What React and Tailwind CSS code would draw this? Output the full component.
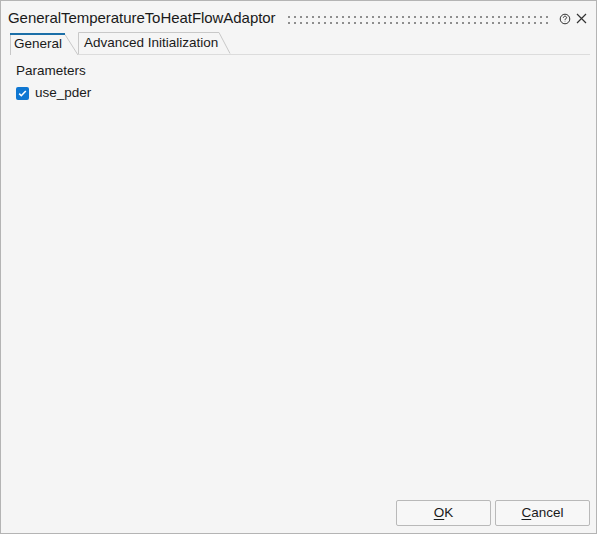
import React from 'react';

const FONT = { fontFamily: '"Liberation Sans", Arial, sans-serif' };

// Grip pattern between the title and the window buttons
function Grip() {
  return (
    <svg className="h-[8px] w-[262px]" viewBox="0 0 262 8">
      <defs>
        <pattern id="grip" width="6" height="6" patternUnits="userSpaceOnUse">
          <rect x="0" y="0" width="2" height="2" fill="#8e8e8e" />
        </pattern>
      </defs>
      <rect x="0" y="0" width="262" height="8" fill="url(#grip)" />
    </svg>
  );
}

function HelpIcon() {
  return (
    <svg width="12" height="12" viewBox="0 0 12 12" fill="none" stroke="#333" strokeWidth="1">
      <circle cx="6" cy="6" r="4.8" />
      <path d="M4.4 4.8c0-1 .7-1.6 1.6-1.6s1.6.6 1.6 1.4c0 .8-.6 1.1-1.1 1.4-.4.2-.5.5-.5.9v.3" />
      <circle cx="6" cy="8.6" r="0.4" fill="#333" stroke="none" />
    </svg>
  );
}

function CloseIcon() {
  return (
    <svg width="11" height="11" viewBox="0 0 11 11" stroke="#333" strokeWidth="1.2">
      <path d="M1 1l9 9M10 1l-9 9" />
    </svg>
  );
}

// Tab with slanted right edge
function Tab({ label, width, active }) {
  return (
    <div className="relative h-[22px] flex items-center" style={{ width }}>
      <svg className="absolute inset-0" width={width} height="22" viewBox={`0 0 ${width} 22`} fill="none">
        {active ? (
          <>
            <path d={`M0.5 22V1.5H${width - 14}L${width - 1} 22`} stroke="#c8c8c8" />
            <path d={`M0 1H${width - 14}`} stroke="#1b6fa8" strokeWidth="2" />
          </>
        ) : (
          <path d={`M0.5 22V0.5H${width - 12}L${width - 1} 21.5`} stroke="#c8c8c8" fill="#f5f5f5" />
        )}
      </svg>
      <span className={`relative ${active ? 'pl-[4px]' : 'pl-[6px]'} pt-[1px] text-[13.5px] text-[#1a1a1a]`}>{label}</span>
    </div>
  );
}

function Button({ hotkey, rest }) {
  return (
    <button className="w-[95px] h-[26px] border border-[#b9b9b9] rounded-[2px] bg-[#f7f7f7] text-[13.5px] text-[#1a1a1a] flex items-center justify-center">
      <span className="underline underline-offset-2">{hotkey}</span>
      {rest}
    </button>
  );
}

export default function App() {
  return (
    <div
      className="w-[597px] h-[534px] border border-[#b4b4b4] bg-[#f5f5f5] flex flex-col"
      style={FONT}
    >
      {/* Title bar */}
      <div className="h-[30px] flex items-center pl-[7px] pr-[9px] pt-[5px]">
        <span className="text-[15px] text-[#1a1a1a] whitespace-nowrap tracking-[-0.05px]">
          GeneralTemperatureToHeatFlowAdaptor
        </span>
        <div className="ml-auto flex items-center pt-[2px]">
          <Grip />
        </div>
        <div className="ml-[9px] flex items-center gap-[5px]">
          <HelpIcon />
          <CloseIcon />
        </div>
      </div>

      {/* Tabs */}
      <div className="flex items-end pl-[9px] pr-[6px]">
        <Tab label="General" width={69} active />
        <div className="-ml-[1px] border-b border-[#dcdcdc] flex-1 flex items-end">
          <div className="mt-[1px]">
            <Tab label="Advanced Initialization" width={153} />
          </div>
        </div>
      </div>

      {/* Content */}
      <div className="flex-1 px-[15px] pt-[6px] flex flex-col">
        <div className="text-[13.5px] text-[#1a1a1a]">Parameters</div>
        <label className="mt-[2px] flex items-center gap-[6px]">
          <span className="w-[13px] h-[13px] rounded-[2px] bg-[#0f77d2] flex items-center justify-center">
            <svg width="9" height="9" viewBox="0 0 9 9" fill="none" stroke="#fff" strokeWidth="1.6">
              <path d="M1.2 4.6l2.1 2.1L7.8 2" />
            </svg>
          </span>
          <span className="text-[13.5px] text-[#1a1a1a]">use_pder</span>
        </label>
      </div>

      {/* Footer */}
      <div className="flex justify-end gap-[4px] pr-[6px] pb-[7px]">
        <Button hotkey="O" rest="K" />
        <Button hotkey="C" rest="ancel" />
      </div>
    </div>
  );
}
